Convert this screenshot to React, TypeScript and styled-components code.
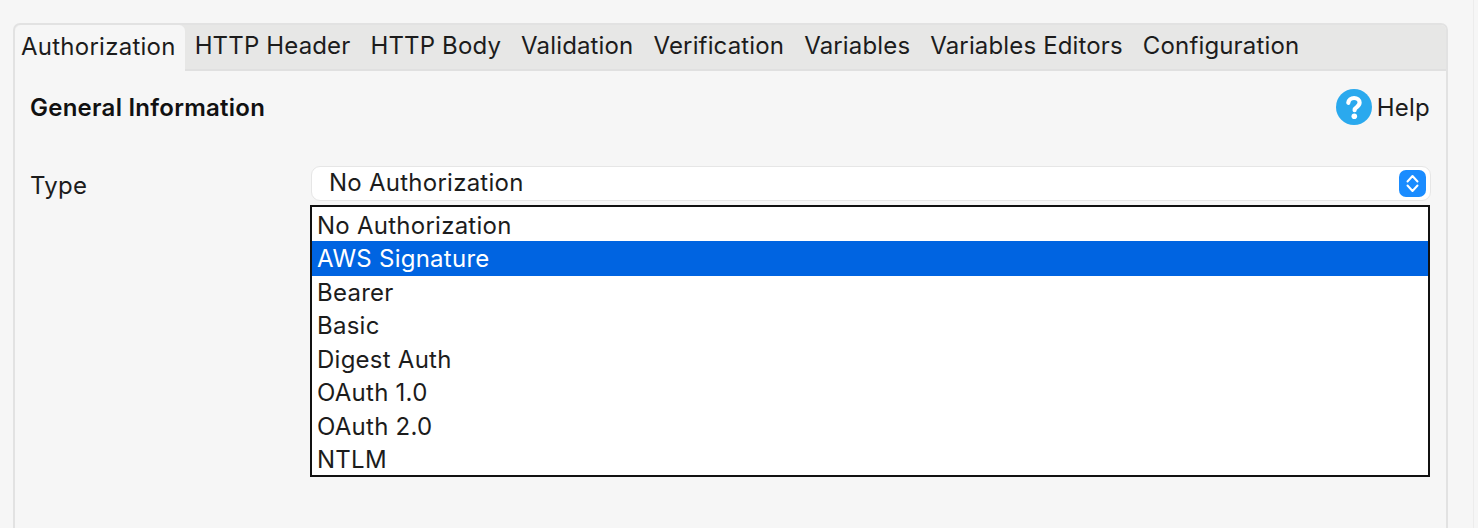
import styled, { createGlobalStyle } from "styled-components";

const GlobalStyle = createGlobalStyle`
    html, body {
        margin: 0;
        height: 100%;
        background: #f6f6f6;
    }
    body {
        font-family: Inter, "Noto Sans", "Liberation Sans", sans-serif;
        color: #1c1c1c;
        letter-spacing: .25px;
        overflow: hidden;
    }
`;

const Page = styled.div`
    width: 1474px;
    height: 528px;
    box-sizing: border-box;
    padding: 23px 0 0 13px;
    border-right: 1px solid #ececec;
    overflow: hidden;
`;

const Panel = styled.div`
    width: 1435px;
    height: 520px;
    box-sizing: border-box;
    border: 2px solid #e2e2e2;
    border-radius: 7px 7px 0 0;
    background: #f6f6f6;
`;

const TabBar = styled.div`
    display: flex;
    height: 44px;
    background: #e7e7e6;
    border-bottom: 2px solid #e0e0e0;
    border-radius: 5px 5px 0 0;
`;

const Tab = styled.div<{ $active?: boolean }>`
    display: flex;
    align-items: center;
    font-size: 24px;
    letter-spacing: ${(p) => (p.$active ? ".25px" : ".15px")};
    height: ${(p) => (p.$active ? "46px" : "40px")};
    box-sizing: border-box;
    padding: ${(p) => (p.$active ? "0 9px 4px 6px" : "0 10px")};
    background: ${(p) => (p.$active ? "#f6f6f6" : "transparent")};
    border-radius: ${(p) => (p.$active ? "6px 6px 0 0" : "0")};
    white-space: nowrap;
`;

const Body = styled.div`
    position: relative;
    padding: 0 15px;
`;

const HeaderRow = styled.div`
    display: flex;
    justify-content: space-between;
    align-items: center;
    height: 70px;
    padding-top: 2px;
    box-sizing: border-box;
`;

const Title = styled.div`
    font-size: 24px;
    font-weight: 600;
    color: #111;
`;

const HelpLink = styled.div`
    display: flex;
    align-items: center;
    gap: 5px;
    margin-right: 1px;
    font-size: 24px;
`;

const FieldRow = styled.div`
    display: flex;
    align-items: center;
    margin-top: 25px;
`;

const FieldLabel = styled.div`
    width: 281px;
    font-size: 24px;
    padding-top: 3px;
`;

const Select = styled.div`
    flex: 1;
    height: 35px;
    box-sizing: border-box;
    display: flex;
    align-items: center;
    justify-content: space-between;
    padding: 0 3px 0 17px;
    background: #fff;
    border: 1px solid #e6e6e6;
    border-radius: 9px;
    font-size: 24px;
`;

const SelectText = styled.span`
    padding-bottom: 2px;
`;

const Stepper = styled.div`
    width: 27px;
    height: 27px;
    margin-right: 1px;
    border-radius: 7px;
    background: #1a8cff;
    display: flex;
`;

const Menu = styled.div`
    position: absolute;
    top: 134px;
    left: 295px;
    width: 1120px;
    box-sizing: border-box;
    border: 2px solid #111;
    background: #fff;
`;

const MenuItem = styled.div<{ $selected?: boolean }>`
    position: relative;
    height: 33.5px;
    box-sizing: border-box;
    display: flex;
    align-items: center;
    padding: 3px 0 0 5px;
    font-size: 24px;
    background: ${(p) => (p.$selected ? "#0064e1" : "transparent")};
    color: ${(p) => (p.$selected ? "#fff" : "#1c1c1c")};
    box-shadow: ${(p) => (p.$selected ? "0 2px 0 #0064e1" : "none")};
    z-index: ${(p) => (p.$selected ? 1 : 0)};
`;

const tabs = [
    "HTTP Header",
    "HTTP Body",
    "Validation",
    "Verification",
    "Variables",
    "Variables Editors",
    "Configuration",
];

const options = [
    "No Authorization",
    "AWS Signature",
    "Bearer",
    "Basic",
    "Digest Auth",
    "OAuth 1.0",
    "OAuth 2.0",
    "NTLM",
];

function HelpIcon() {
    return (
        <svg width="36" height="36" viewBox="0 0 36 36">
            <circle cx="18" cy="18" r="18" fill="#2aa9ee" />
            <path
                d="M12.3 13.800c.3-3 2.700-4.800 5.800-4.800 3.200 0 5.500 1.900 5.500 4.600 0 2.100-1.100 3.200-2.700 4.300-1.400.9-2.300 1.700-2.300 3.300"
                fill="none"
                stroke="#fff"
                strokeWidth="4.200"
                strokeLinecap="round"
            />
            <circle cx="18.300" cy="27.300" r="2.800" fill="#fff" />
        </svg>
    );
}

function StepperIcon() {
    return (
        <svg width="27" height="27" viewBox="0 0 27 27" fill="none" stroke="#fff" strokeWidth="2" strokeLinecap="round" strokeLinejoin="round">
            <path d="M8.500 11.500 13.500 6l5 5.500" />
            <path d="M8.500 15.500 13.500 21l5-5.500" />
        </svg>
    );
}

export default function App() {
    return (
        <>
            <GlobalStyle />
            <Page>
                <Panel>
                    <TabBar>
                        <Tab $active>Authorization</Tab>
                        {tabs.map((t) => (
                            <Tab key={t}>{t}</Tab>
                        ))}
                    </TabBar>
                    <Body>
                        <HeaderRow>
                            <Title>General Information</Title>
                            <HelpLink>
                                <HelpIcon />
                                Help
                            </HelpLink>
                        </HeaderRow>
                        <FieldRow>
                            <FieldLabel>Type</FieldLabel>
                            <Select>
                                <SelectText>No Authorization</SelectText>
                                <Stepper>
                                    <StepperIcon />
                                </Stepper>
                            </Select>
                        </FieldRow>
                        <Menu>
                            {options.map((o) => (
                                <MenuItem key={o} $selected={o === "AWS Signature"}>
                                    {o}
                                </MenuItem>
                            ))}
                        </Menu>
                    </Body>
                </Panel>
            </Page>
        </>
    );
}
